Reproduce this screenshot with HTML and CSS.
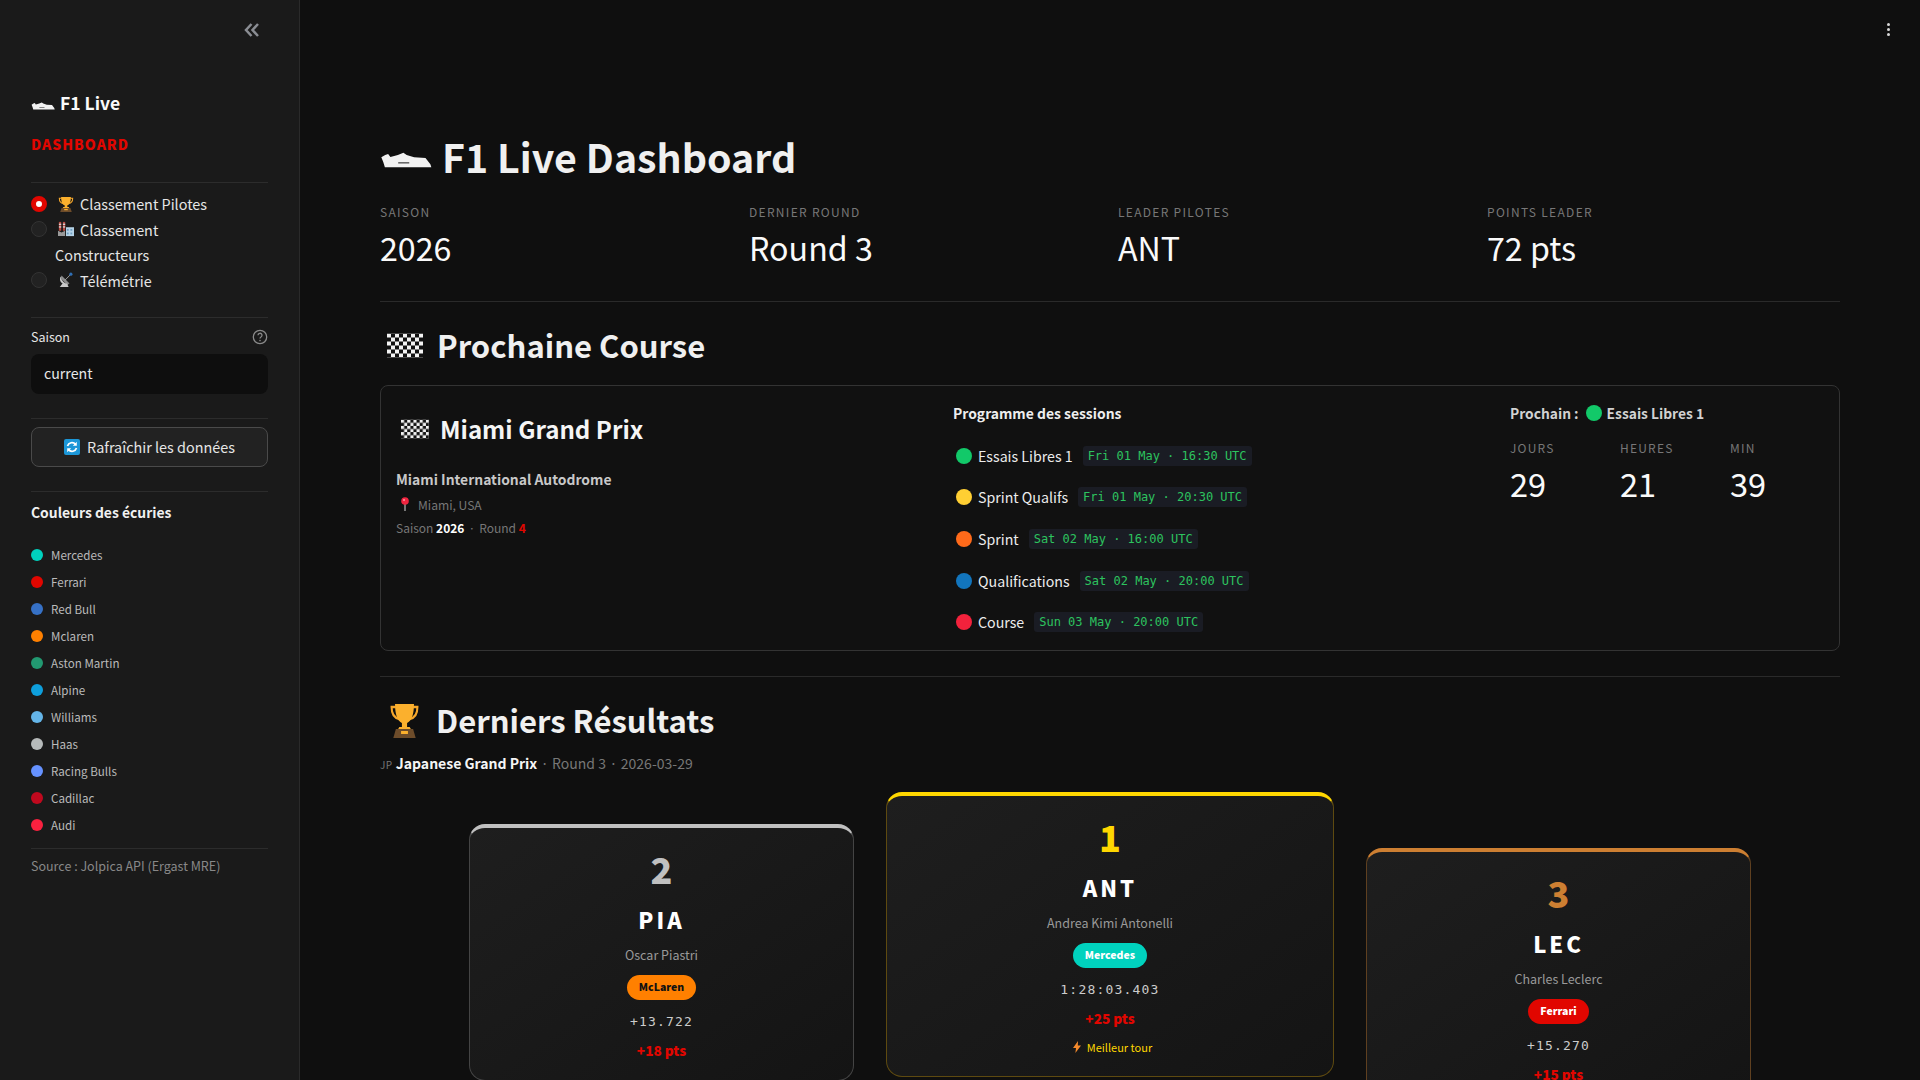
FILE: index.html
```html
<!DOCTYPE html>
<html lang="fr">
<head>
<meta charset="utf-8">
<title>F1 Live Dashboard</title>
<link rel="stylesheet" href="styles.css">
</head>
<body>
<svg class="defs" width="0" height="0" aria-hidden="true">
  <defs>
    <symbol id="car" viewBox="0 0 160 42" preserveAspectRatio="none"><path fill="currentColor" d="M4 14 16 8l9-3 7 8 23-5L72 2l10 6 23 6 35 2 15 16 3 8H15L10 26Z"/><rect x="56" y="27" width="34" height="3" fill="#333"/></symbol>
    <pattern id="chk" width="8" height="8" patternUnits="userSpaceOnUse"><rect width="8" height="8" fill="#111"/><rect width="4" height="4" fill="#f2f2f2"/><rect x="4" y="4" width="4" height="4" fill="#f2f2f2"/></pattern>
    <symbol id="flag" viewBox="0 0 36 24"><rect width="36" height="24" fill="url(#chk)"/></symbol>
    <symbol id="trophy" viewBox="0 0 36 36" preserveAspectRatio="none"><path fill="none" stroke="#f6a72b" stroke-width="2.400" d="M8 5H3c0 7 3 11 9 12M28 5h5c0 7-3 11-9 12"/><path fill="#fbb02d" d="M7 2h22c0 11-3 17-8 19v4h-6v-4C10 19 7 13 7 2Z"/><path fill="#fbb02d" d="M12 25h12l2 3H10Z"/><path fill="#6d4c2a" d="M8 27h20l3 9H5Z"/><rect x="14" y="29" width="8" height="3" fill="#fbb02d"/></symbol>
    <symbol id="factory" viewBox="0 0 18 18"><rect x="1" y="1" width="2.600" height="10" fill="#b94a42"/><rect x="5.500" y="1" width="2.600" height="10" fill="#b94a42"/><rect x="1" y="3" width="2.600" height="1.400" fill="#ddd"/><rect x="5.500" y="3" width="2.600" height="1.400" fill="#ddd"/><rect x="1" y="6" width="2.600" height="1.400" fill="#ddd"/><rect x="5.500" y="6" width="2.600" height="1.400" fill="#ddd"/><path fill="#9a9a9a" d="M0 17V11l4 2 4-2v6Z"/><rect x="9" y="7" width="9" height="10" fill="#b5d2e6"/><rect x="10" y="9" width="2" height="2" fill="#6f9fc0"/><rect x="14" y="9" width="2" height="2" fill="#6f9fc0"/><rect x="10" y="13" width="2" height="2" fill="#6f9fc0"/><rect x="14" y="13" width="2" height="2" fill="#6f9fc0"/></symbol>
    <symbol id="dish" viewBox="0 0 18 18"><path fill="#c9c9c9" d="M3 5c1 5 4 8 9 9-3 1-7 0-9-3-1-2-1-4 0-6Z"/><path fill="#8e8e8e" d="M4 4l9 9-3 1-7-7Z"/><path fill="#c9c9c9" d="M5 13h5l2 4H2Z"/><path stroke="#aaa" stroke-width="1" d="M8 9l6-6"/><circle cx="14.500" cy="2.500" r="1.800" fill="#2f6fb5"/></symbol>
    <symbol id="pin" viewBox="0 0 12 14"><rect x="5.400" y="5" width="1.200" height="9" fill="#b9b9b9"/><circle cx="6" cy="4" r="3.800" fill="#f0243f"/><circle cx="5" cy="3" r="1" fill="#ff9aa8"/></symbol>
    <symbol id="refresh" viewBox="0 0 16 16"><rect width="16" height="16" rx="2" fill="#1c97d8"/><path fill="none" stroke="#fff" stroke-width="1.700" d="M3.500 7a4.600 4.600 0 0 1 8-1.600M12.500 9a4.600 4.600 0 0 1-8 1.600"/><path fill="#fff" d="M12.800 2.800v4h-4ZM3.200 13.200v-4h4Z"/></symbol>
    <symbol id="bolt" viewBox="0 0 8 12"><path fill="#f58a2c" d="M5 0 0 7h3L2.400 12 8 4.600H4.800Z"/></symbol>
  </defs>
</svg>
<div class="app">
  <aside class="sidebar">
    <div class="collapse-row">
      <svg class="chev" viewBox="0 0 16 14"><path fill="none" stroke="#8a8d93" stroke-width="2.500" d="M7.500 1 2 7l5.500 6M14 1 8.500 7l5.500 6"/></svg>
    </div>
    <div class="brand"><svg class="brand-car"><use href="#car"/></svg><span>F1 Live</span></div>
    <div class="brand-sub">DASHBOARD</div>
    <hr class="side-hr hr-a">
    <div class="radio-group">
      <div class="radio-row"><span class="radio on"></span><svg class="r-ico"><use href="#trophy"/></svg><span>Classement Pilotes</span></div>
      <div class="radio-row"><span class="radio"></span><svg class="r-ico"><use href="#factory"/></svg><span>Classement</span></div>
      <div class="radio-row cont">Constructeurs</div>
      <div class="radio-row"><span class="radio"></span><svg class="r-ico"><use href="#dish"/></svg><span>Télémétrie</span></div>
    </div>
    <hr class="side-hr hr-b">
    <div class="field-head"><span>Saison</span><svg class="help" viewBox="0 0 16 16"><circle cx="8" cy="8" r="6.700" fill="none" stroke="#8a8a8a" stroke-width="1.300"/><path fill="none" stroke="#8a8a8a" stroke-width="1.300" d="M6 6.300a2 2 0 1 1 3 1.700c-.7.400-1 .8-1 1.600"/><circle cx="8" cy="11.600" r=".8" fill="#8a8a8a"/></svg></div>
    <div class="select">current</div>
    <hr class="side-hr hr-c">
    <div class="btn"><svg class="btn-ico"><use href="#refresh"/></svg><span>Rafraîchir les données</span></div>
    <hr class="side-hr hr-d">
    <div class="legend-title">Couleurs des écuries</div>
    <ul class="legend">
      <li><i class="dot c-mer"></i>Mercedes</li>
      <li><i class="dot c-fer"></i>Ferrari</li>
      <li><i class="dot c-rbr"></i>Red Bull</li>
      <li><i class="dot c-mcl"></i>Mclaren</li>
      <li><i class="dot c-ast"></i>Aston Martin</li>
      <li><i class="dot c-alp"></i>Alpine</li>
      <li><i class="dot c-wil"></i>Williams</li>
      <li><i class="dot c-haa"></i>Haas</li>
      <li><i class="dot c-rac"></i>Racing Bulls</li>
      <li><i class="dot c-cad"></i>Cadillac</li>
      <li><i class="dot c-aud"></i>Audi</li>
    </ul>
    <hr class="side-hr hr-e">
    <div class="source">Source : Jolpica API (Ergast MRE)</div>
  </aside>

  <main class="main">
    <div class="kebab"><i></i><i></i><i></i></div>
    <h1 class="title"><svg class="title-car"><use href="#car"/></svg><span>F1 Live Dashboard</span></h1>
    <section class="metrics">
      <div><div class="m-label">SAISON</div><div class="m-value">2026</div></div>
      <div><div class="m-label">DERNIER ROUND</div><div class="m-value">Round 3</div></div>
      <div><div class="m-label">LEADER PILOTES</div><div class="m-value">ANT</div></div>
      <div><div class="m-label">POINTS LEADER</div><div class="m-value">72 pts</div></div>
    </section>
    <hr class="main-hr hr-1">
    <h2 class="section"><svg class="sec-flag"><use href="#flag"/></svg><span>Prochaine Course</span></h2>

    <section class="race-card">
      <div class="col-info">
        <h3 class="gp"><svg class="gp-flag"><use href="#flag"/></svg><span>Miami Grand Prix</span></h3>
        <div class="circuit">Miami International Autodrome</div>
        <div class="place"><svg class="pin"><use href="#pin"/></svg><span>Miami, USA</span></div>
        <div class="season">Saison <b>2026</b><span class="sep">·</span>Round <b class="red">4</b></div>
      </div>
      <div class="col-sessions">
        <div class="s-title">Programme des sessions</div>
        <div class="s-row"><i class="s-dot g"></i><span>Essais Libres 1</span><code>Fri 01 May · 16:30 UTC</code></div>
        <div class="s-row"><i class="s-dot y"></i><span>Sprint Qualifs</span><code>Fri 01 May · 20:30 UTC</code></div>
        <div class="s-row"><i class="s-dot o"></i><span>Sprint</span><code>Sat 02 May · 16:00 UTC</code></div>
        <div class="s-row"><i class="s-dot b"></i><span>Qualifications</span><code>Sat 02 May · 20:00 UTC</code></div>
        <div class="s-row"><i class="s-dot r"></i><span>Course</span><code>Sun 03 May · 20:00 UTC</code></div>
      </div>
      <div class="col-count">
        <div class="next"><span>Prochain :</span><i class="s-dot g"></i><span>Essais Libres 1</span></div>
        <div class="count-grid">
          <div><div class="c-label">JOURS</div><div class="c-value">29</div></div>
          <div><div class="c-label">HEURES</div><div class="c-value">21</div></div>
          <div><div class="c-label">MIN</div><div class="c-value">39</div></div>
        </div>
      </div>
    </section>

    <hr class="main-hr hr-2">
    <h2 class="section results"><svg class="sec-trophy"><use href="#trophy"/></svg><span>Derniers Résultats</span></h2>
    <div class="result-meta"><small>JP</small> <b>Japanese Grand Prix</b><span class="sep">·</span>Round 3<span class="sep">·</span>2026-03-29</div>

    <section class="podium">
      <article class="p-card silver">
        <div class="pos">2</div>
        <div class="code">PIA</div>
        <div class="name">Oscar Piastri</div>
        <div class="team t-mcl">McLaren</div>
        <div class="time">+13.722</div>
        <div class="pts">+18 pts</div>
      </article>
      <article class="p-card gold">
        <div class="pos">1</div>
        <div class="code">ANT</div>
        <div class="name">Andrea Kimi Antonelli</div>
        <div class="team t-mer">Mercedes</div>
        <div class="time">1:28:03.403</div>
        <div class="pts">+25 pts</div>
        <div class="fast"><svg class="bolt"><use href="#bolt"/></svg><span>Meilleur tour</span></div>
      </article>
      <article class="p-card bronze">
        <div class="pos">3</div>
        <div class="code">LEC</div>
        <div class="name">Charles Leclerc</div>
        <div class="team t-fer">Ferrari</div>
        <div class="time">+15.270</div>
        <div class="pts">+15 pts</div>
      </article>
    </section>
  </main>
</div>
</body>
</html>
```
FILE: styles.css
```css
* { box-sizing: border-box; }
html, body { margin: 0; height: 100%; overflow: hidden; }
body { background: #0f0f0f; color: #f0f0f0; font-family: "Noto Sans CJK JP", "Noto Sans", sans-serif; font-size: 14px; }
.defs { position: absolute; }
.app { display: flex; height: 1080px; overflow: hidden; }

/* Sidebar */
.sidebar { width: 300px; flex: none; height: 1080px; background: #1a1a1a; border-right: 1px solid #2a2a2a; padding: 0 31px; overflow: hidden; }
.collapse-row { height: 80px; display: flex; justify-content: flex-end; padding: 23px 8px 0 0; }
.chev { width: 16px; height: 14px; }
.brand { display: flex; align-items: center; gap: 5px; height: 28px; margin-top: 9px; font-size: 17.5px; font-weight: 600; line-height: 28px; color: #fafafa; }
.brand-car { width: 24px; height: 8px; margin-top: 5px; color: #f2f2f2; }
.brand-sub { margin-top: 17px; height: 20px; line-height: 20px; font-size: 14px; font-weight: 900; letter-spacing: 1px; color: #e10600; }
.side-hr { margin: 0; border: 0; height: 1px; background: #2c2c2c; }
.hr-a { margin-top: 28px; }
.radio-group { margin-top: 8px; }
.radio-row { display: flex; align-items: center; height: 25.5px; font-size: 14.4px; line-height: 25px; color: #e6e6e6; }
.radio-row.cont { padding-left: 24px; }
.radio { width: 16px; height: 16px; border-radius: 50%; background: #222; border: 1px solid #333; margin-right: 11px; flex: none; }
.radio.on { background: #fff; border: 5px solid #e10600; }
.r-ico { width: 16px; height: 16px; margin-right: 6px; flex: none; }
.hr-b { margin-top: 24px; }
.field-head { display: flex; justify-content: space-between; align-items: center; height: 20px; margin-top: 8px; font-size: 12.5px; color: #e6e6e6; }
.help { width: 16px; height: 16px; margin-top: 1px; }
.select { height: 40px; margin-top: 8px; background: #0e0e0e; border-radius: 8px; padding-left: 13px; font-size: 14.2px; line-height: 38px; color: #e8e8e8; }
.hr-c { margin-top: 24px; }
.btn { display: flex; align-items: center; justify-content: center; gap: 7px; height: 40px; margin-top: 8px; padding-bottom: 2px; background: #222; border: 1px solid #4a4a4a; border-radius: 8px; font-size: 14.4px; color: #e6e6e6; }
.btn-ico { width: 16px; height: 16px; margin-top: 1px; }
.hr-d { margin-top: 24px; }
.legend-title { margin-top: 8px; height: 24px; line-height: 24px; font-size: 13.9px; font-weight: 600; color: #f0f0f0; }
.legend { list-style: none; margin: 17px 0 0; padding: 0; }
.legend li { display: flex; align-items: center; height: 27px; font-size: 11.6px; color: #bbb; }
.dot { width: 12px; height: 12px; border-radius: 50%; margin-right: 8px; flex: none; }
.c-mer { background: #00d2be; }
.c-fer { background: #e10600; }
.c-rbr { background: #3671c6; }
.c-mcl { background: #ff8000; }
.c-ast { background: #229971; }
.c-alp { background: #0e9fdc; }
.c-wil { background: #64b5e8; }
.c-haa { background: #b6baba; }
.c-rac { background: #6692ff; }
.c-cad { background: #c0091e; }
.c-aud { background: #f9213f; }
.hr-e { margin-top: 10px; }
.source { margin-top: 7px; height: 20px; line-height: 20px; font-size: 12.5px; color: #888; }

/* Main */
.main { position: relative; flex: 1; min-width: 0; height: 1080px; padding: 130px 80px 0; overflow: hidden; background: #0f0f0f; }
.kebab { position: absolute; top: 23px; right: 30px; display: flex; flex-direction: column; gap: 2px; }
.kebab i { width: 3px; height: 3px; border-radius: 50%; background: #d8d8d8; }
.title { display: flex; align-items: center; gap: 10px; margin: 0; height: 52px; font-size: 39.3px; line-height: 52px; font-weight: 700; color: #f0f0f0; }
.title-car { width: 52px; height: 16px; margin-top: 8px; color: #f2f2f2; }
.metrics { display: grid; grid-template-columns: repeat(4, 1fr); gap: 16px; margin-top: 21px; }
.m-label { height: 18px; line-height: 18px; font-size: 12px; letter-spacing: 1.3px; color: #777; }
.m-value { height: 46px; line-height: 46px; margin-top: 3px; font-size: 32.2px; color: #fafafa; }
.main-hr { margin: 0; border: 0; height: 1px; background: #2a2a2a; }
.hr-1 { margin-top: 31px; }
.section { display: flex; align-items: center; gap: 14px; margin: 20px 0 0; padding-left: 7px; height: 46px; line-height: 46px; font-size: 31px; font-weight: 600; color: #f0f0f0; }
.sec-flag { width: 36px; height: 25px; }
.race-card { display: grid; grid-template-columns: 557px 557px 1fr; height: 266px; margin-top: 17px; padding: 0 15px; border: 1px solid #333; border-radius: 8px; background: #111; }
.gp { display: flex; align-items: center; gap: 11px; margin: 23px 0 0 5px; height: 40px; line-height: 40px; font-size: 24.1px; font-weight: 600; color: #f5f5f5; }
.gp-flag { width: 28px; height: 20px; }
.circuit { margin-top: 18px; height: 24px; line-height: 24px; font-size: 13.9px; font-weight: 600; color: #c8c8c8; }
.place { display: flex; align-items: center; margin-top: 2px; height: 22px; font-size: 12.1px; color: #777; padding-left: 3px; }
.pin { width: 12px; height: 14px; margin-right: 7px; }
.season { height: 24px; margin-top: 1px; line-height: 24px; font-size: 12px; color: #777; }
.season b { color: #fff; font-weight: 700; }
.season b.red { color: #e10600; }
.sep { margin: 0 4px; }
.s-title { margin-top: 15px; height: 24px; line-height: 24px; font-size: 13.9px; font-weight: 600; color: #eee; }
.col-sessions .s-title { margin-bottom: 10px; }
.s-row { display: flex; align-items: center; height: 41.6px; padding-left: 3px; font-size: 14.2px; color: #ececec; }
.s-dot { display: inline-block; width: 16px; height: 16px; border-radius: 50%; margin-right: 6px; flex: none; }
.s-dot.g { background: #12c969; }
.s-dot.y { background: #ffcf33; }
.s-dot.o { background: #ff6a1a; }
.s-dot.b { background: #1275bd; }
.s-dot.r { background: #f3223c; }
code { margin-left: 10px; padding: 0 5px; height: 20px; line-height: 20px; border-radius: 3px; background: #1a1c24; font-family: "DejaVu Sans Mono", monospace; font-size: 12px; color: #2dc35f; }
.next { display: flex; align-items: center; margin-top: 15px; height: 24px; font-size: 13.8px; font-weight: 600; color: #d2d2d2; }
.next .s-dot { margin: 0 5px 0 7px; }
.count-grid { display: grid; grid-template-columns: 110px 110px 110px; margin-top: 14px; }
.c-label { height: 18px; line-height: 18px; font-size: 12px; letter-spacing: 1.2px; color: #777; }
.c-value { height: 46px; line-height: 46px; margin-top: 3px; font-size: 32.6px; color: #fafafa; }
.hr-2 { margin-top: 25px; }
.results { margin-top: 20px; gap: 16px; }
.sec-trophy { width: 31px; height: 36px; margin-left: 2px; }
.result-meta { margin-top: 8px; height: 24px; line-height: 24px; font-size: 14px; color: #777; }
.result-meta small { font-size: 10px; letter-spacing: .5px; }
.result-meta b { color: #f5f5f5; font-weight: 600; }
.result-meta .sep { margin: 0 3.5px; }
.podium { display: flex; justify-content: center; align-items: flex-start; gap: 32px; margin-top: 17px; }
.p-card { width: 385px; flex: none; text-align: center; border: 1px solid #444; border-top-width: 4px; border-radius: 16px; background: linear-gradient(145deg, #1e1e1e, #141414); padding-bottom: 20px; }
.p-card.silver { margin-top: 32px; border-color: #444; border-top-color: #c0c0c0; }
.p-card.gold { width: 448px; border-color: #5e4a10; border-top-color: #ffd700; }
.p-card.bronze { margin-top: 56px; border-color: #5f4020; border-top-color: #cd7f32; }
.pos { height: 52px; line-height: 52px; margin-top: 14px; font-size: 36px; font-weight: 900; }
.silver .pos { color: #c0c0c0; }
.gold .pos { color: #ffd700; }
.bronze .pos { color: #cd7f32; }
.code { height: 32px; line-height: 32px; margin-top: 9px; font-size: 22px; font-weight: 900; letter-spacing: 3px; color: #fff; }
.name { height: 20px; line-height: 20px; margin-top: 10px; font-size: 12.5px; color: #999; }
.team { display: block; width: fit-content; height: 25px; line-height: 24px; margin: 10px auto 0; padding: 0 12px; border-radius: 13px; font-size: 10.5px; font-weight: 900; color: #fff; }
.t-mcl { background: #ff8000; color: #111; }
.t-mer { background: #00d2be; }
.t-fer { background: #e10600; }
.time { height: 20px; line-height: 20px; margin-top: 12px; font-family: "DejaVu Sans Mono", monospace; font-size: 13px; letter-spacing: 1.2px; color: #ccc; }
.pts { height: 20px; line-height: 20px; margin-top: 8px; font-size: 13.6px; font-weight: 900; color: #e10600; }
.fast { display: flex; justify-content: center; align-items: center; gap: 6px; height: 18px; margin-top: 10px; padding-left: 5px; font-size: 11px; color: #ffd700; }
.bolt { width: 8px; height: 12px; }
```
